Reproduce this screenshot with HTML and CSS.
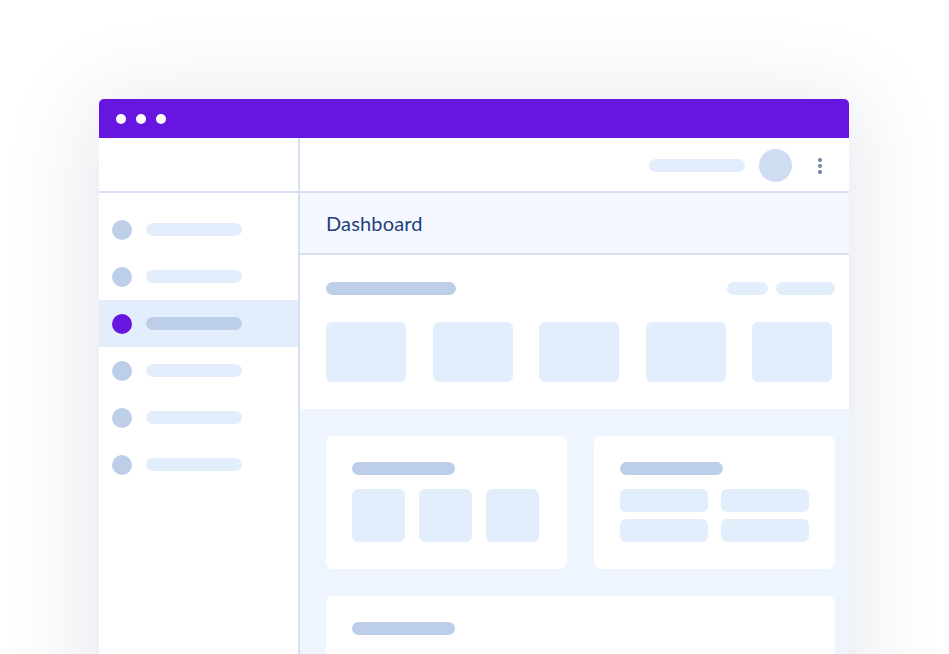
FILE: index.html
```html
<!DOCTYPE html>
<html lang="en">
<head>
<meta charset="utf-8">
<title>Dashboard</title>
<link rel="stylesheet" href="styles.css">
</head>
<body>
<div class="window">
  <div class="titlebar">
    <span class="dot"></span><span class="dot"></span><span class="dot"></span>
  </div>
  <div class="app">
    <aside class="sidebar">
      <div class="side-top"></div>
      <ul class="nav">
        <li class="nav-item"><span class="ico"></span><span class="label"></span></li>
        <li class="nav-item"><span class="ico"></span><span class="label"></span></li>
        <li class="nav-item active"><span class="ico"></span><span class="label"></span></li>
        <li class="nav-item"><span class="ico"></span><span class="label"></span></li>
        <li class="nav-item"><span class="ico"></span><span class="label"></span></li>
        <li class="nav-item"><span class="ico"></span><span class="label"></span></li>
      </ul>
    </aside>
    <main class="main">
      <div class="topbar">
        <span class="search"></span>
        <span class="avatar"></span>
        <span class="kebab"><i></i><i></i><i></i></span>
      </div>
      <div class="page-head"><h1>Dashboard</h1></div>
      <section class="overview">
        <div class="ov-head">
          <span class="bar bar-title"></span>
          <div class="pills"><span class="pill pill-s"></span><span class="pill pill-m"></span></div>
        </div>
        <div class="tiles">
          <span class="tile"></span><span class="tile"></span><span class="tile"></span><span class="tile"></span><span class="tile"></span>
        </div>
      </section>
      <section class="content">
        <div class="card-row">
          <div class="card">
            <span class="bar bar-card"></span>
            <div class="squares"><span class="sq"></span><span class="sq"></span><span class="sq"></span></div>
          </div>
          <div class="card">
            <span class="bar bar-card"></span>
            <div class="grid2"><span class="cell"></span><span class="cell"></span><span class="cell"></span><span class="cell"></span></div>
          </div>
        </div>
        <div class="card card-wide">
          <span class="bar bar-card"></span>
        </div>
      </section>
    </main>
  </div>
</div>
</body>
</html>
```
FILE: styles.css
```css
* { box-sizing: border-box; }
html, body { margin: 0; padding: 0; }
body {
  width: 949px;
  height: 654px;
  overflow: hidden;
  background: #ffffff;
  font-family: Lato, "Open Sans", sans-serif;
}
.window {
  margin: 99px 0 0 99px;
  width: 750px;
  height: 640px;
  border-radius: 5px 5px 0 0;
  background: #ffffff;
  box-shadow: 0 10px 90px 10px rgba(30, 50, 90, 0.11);
  overflow: hidden;
}
.titlebar {
  height: 39px;
  background: #6716e0;
  display: flex;
  align-items: center;
  gap: 10px;
  padding-left: 17px;
}
.dot {
  width: 10px;
  height: 10px;
  border-radius: 50%;
  background: #ffffff;
}
.app {
  display: flex;
  height: 601px;
}
.sidebar {
  width: 201px;
  border-right: 2px solid #d5e1f3;
  flex: none;
}
.side-top {
  height: 55px;
  border-bottom: 2px solid #d5e1f3;
}
.nav {
  list-style: none;
  margin: 0;
  padding: 13px 0 0;
}
.nav-item {
  height: 47px;
  display: flex;
  align-items: center;
  padding-left: 13px;
  gap: 14px;
}
.ico {
  width: 20px;
  height: 20px;
  border-radius: 50%;
  background: #bdcee9;
}
.label {
  width: 96px;
  height: 13px;
  border-radius: 7px;
  background: #e3eefd;
}
.nav-item.active { background: #e3eefd; }
.nav-item.active .ico { background: #6716e0; }
.nav-item.active .label { background: #bdcee9; }

.main {
  flex: 1;
  display: flex;
  flex-direction: column;
  background: #eef5ff;
}
.topbar {
  height: 55px;
  background: #ffffff;
  border-bottom: 2px solid #d5e1f3;
  display: flex;
  align-items: center;
  justify-content: flex-end;
  padding: 2px 27px 0 0;
}
.search {
  width: 96px;
  height: 13px;
  border-radius: 7px;
  background: #e3eefd;
  margin-right: 14px;
}
.avatar {
  width: 33px;
  height: 33px;
  border-radius: 50%;
  background: #cfddf3;
  margin-right: 26px;
}
.kebab {
  display: flex;
  flex-direction: column;
  gap: 2px;
}
.kebab i {
  width: 4px;
  height: 4px;
  border-radius: 50%;
  background: #6e83a5;
}
.page-head {
  height: 62px;
  background: #f5f9ff;
  border-bottom: 2px solid #d5e1f3;
  display: flex;
  align-items: center;
  padding-left: 26px;
}
.page-head h1 {
  margin: 0;
  font-size: 20px;
  font-weight: 400;
  color: #1f3f7c;
  letter-spacing: 0.15px;
}
.overview {
  background: #ffffff;
  padding: 27px 14px 27px 26px;
}
.ov-head {
  display: flex;
  justify-content: space-between;
  align-items: center;
}
.bar {
  display: block;
  height: 13px;
  border-radius: 7px;
  background: #bdcee9;
}
.bar-title { width: 130px; }
.pills { display: flex; gap: 8px; }
.pill {
  height: 13px;
  border-radius: 7px;
  background: #e3eefd;
}
.pill-s { width: 41px; }
.pill-m { width: 59px; }
.tiles {
  margin-top: 27px;
  margin-right: 3px;
  display: flex;
  justify-content: space-between;
}
.tile {
  width: 80px;
  height: 60px;
  border-radius: 6px;
  background: #e3eefd;
}
.content {
  flex: 1;
  background: #eef5ff;
  padding: 27px 14px 0 26px;
  display: flex;
  flex-direction: column;
  gap: 27px;
}
.card-row {
  display: flex;
  gap: 27px;
}
.card {
  flex: 1;
  background: #ffffff;
  border-radius: 7px;
  padding: 26px 26px 27px;
}
.bar-card { width: 103px; }
.squares {
  margin-top: 14px;
  display: flex;
  gap: 14px;
}
.sq {
  width: 53px;
  height: 53px;
  border-radius: 6px;
  background: #e3eefd;
}
.grid2 {
  margin-top: 14px;
  display: grid;
  grid-template-columns: 88px 88px;
  column-gap: 13px;
  row-gap: 7px;
}
.cell {
  height: 23px;
  border-radius: 6px;
  background: #e3eefd;
}
.card-wide { flex: 1; }
```
